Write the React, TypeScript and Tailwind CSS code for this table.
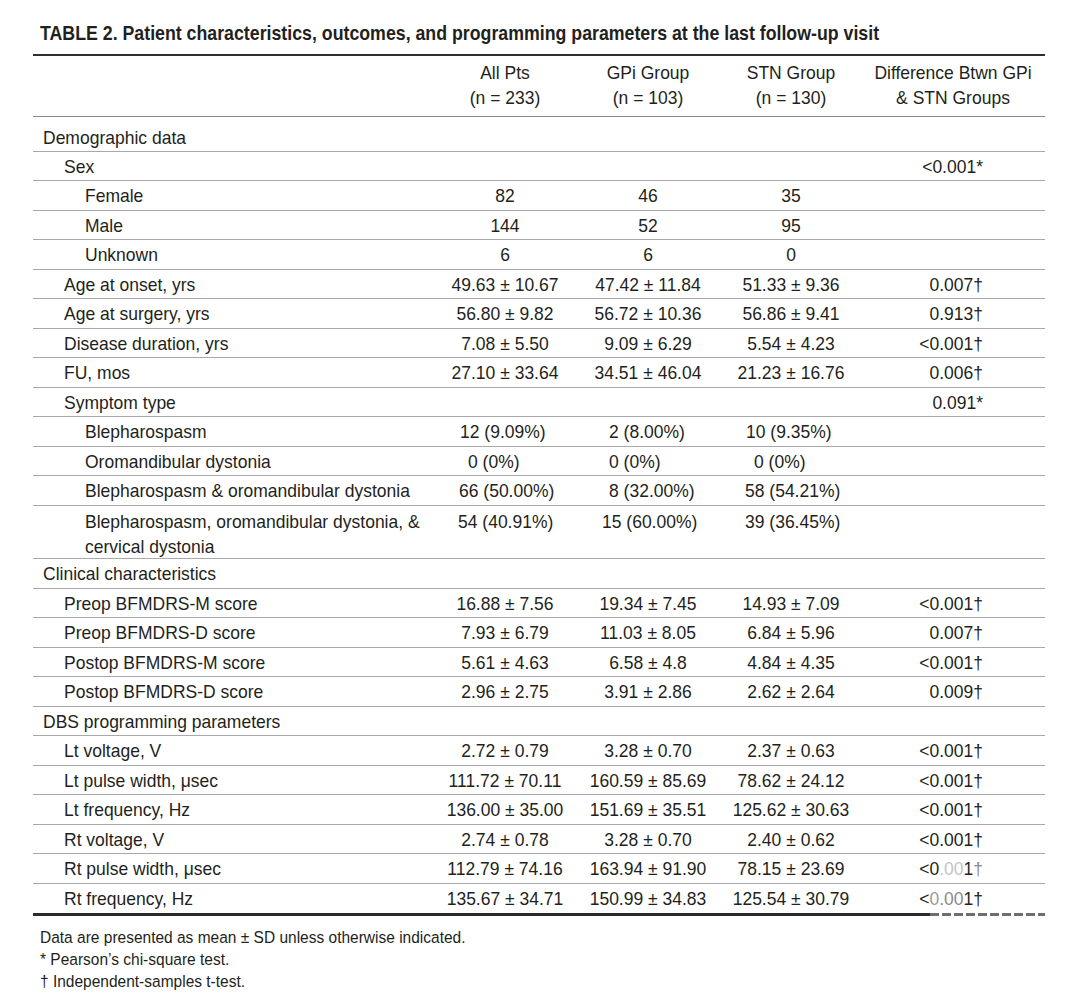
import React from "react";

type Cell = { t: string; cls?: string } | string;
type Row = {
  label: React.ReactNode;
  level: 0 | 1 | 2;
  vals?: Cell[];
  diff?: React.ReactNode;
  double?: boolean;
  first?: boolean;
  last?: boolean;
};

const rows: Row[] = [
  { label: "Demographic data", level: 0, first: true },
  { label: "Sex", level: 1, diff: "<0.001*" },
  { label: "Female", level: 2, vals: ["82", "46", "35"] },
  { label: "Male", level: 2, vals: ["144", "52", "95"] },
  { label: "Unknown", level: 2, vals: ["6", "6", "0"] },
  { label: "Age at onset, yrs", level: 1, vals: ["49.63 ± 10.67", "47.42 ± 11.84", "51.33 ± 9.36"], diff: "0.007†" },
  { label: "Age at surgery, yrs", level: 1, vals: ["56.80 ± 9.82", "56.72 ± 10.36", "56.86 ± 9.41"], diff: "0.913†" },
  { label: "Disease duration, yrs", level: 1, vals: ["7.08 ± 5.50", "9.09 ± 6.29", "5.54 ± 4.23"], diff: "<0.001†" },
  { label: "FU, mos", level: 1, vals: ["27.10 ± 33.64", "34.51 ± 46.04", "21.23 ± 16.76"], diff: "0.006†" },
  { label: "Symptom type", level: 1, diff: "0.091*" },
  {
    label: "Blepharospasm",
    level: 2,
    vals: [
      { t: "12 (9.09%)", cls: "pl-[27px]" },
      { t: "2 (8.00%)", cls: "pl-[32px]" },
      { t: "10 (9.35%)", cls: "pl-[27px]" },
    ],
  },
  {
    label: "Oromandibular dystonia",
    level: 2,
    vals: [
      { t: "0 (0%)", cls: "pl-[35px]" },
      { t: "0 (0%)", cls: "pl-[32px]" },
      { t: "0 (0%)", cls: "pl-[35px]" },
    ],
  },
  {
    label: "Blepharospasm & oromandibular dystonia",
    level: 2,
    vals: [
      { t: "66 (50.00%)", cls: "pl-[26px]" },
      { t: "8 (32.00%)", cls: "pl-[32px]" },
      { t: "58 (54.21%)", cls: "pl-[26px]" },
    ],
  },
  {
    label: (
      <>
        <T>Blepharospasm, oromandibular dystonia, &amp;</T>
        <br />
        <T>cervical dystonia</T>
      </>
    ),
    level: 2,
    double: true,
    vals: [
      { t: "54 (40.91%)", cls: "pl-[25px]" },
      { t: "15 (60.00%)", cls: "pl-[25px]" },
      { t: "39 (36.45%)", cls: "pl-[26px]" },
    ],
  },
  { label: "Clinical characteristics", level: 0 },
  { label: "Preop BFMDRS-M score", level: 1, vals: ["16.88 ± 7.56", "19.34 ± 7.45", "14.93 ± 7.09"], diff: "<0.001†" },
  { label: "Preop BFMDRS-D score", level: 1, vals: ["7.93 ± 6.79", "11.03 ± 8.05", "6.84 ± 5.96"], diff: "0.007†" },
  { label: "Postop BFMDRS-M score", level: 1, vals: ["5.61 ± 4.63", "6.58 ± 4.8", "4.84 ± 4.35"], diff: "<0.001†" },
  { label: "Postop BFMDRS-D score", level: 1, vals: ["2.96 ± 2.75", "3.91 ± 2.86", "2.62 ± 2.64"], diff: "0.009†" },
  { label: "DBS programming parameters", level: 0 },
  { label: "Lt voltage, V", level: 1, vals: ["2.72 ± 0.79", "3.28 ± 0.70", "2.37 ± 0.63"], diff: "<0.001†" },
  { label: "Lt pulse width, μsec", level: 1, vals: ["111.72 ± 70.11", "160.59 ± 85.69", "78.62 ± 24.12"], diff: "<0.001†" },
  { label: "Lt frequency, Hz", level: 1, vals: ["136.00 ± 35.00", "151.69 ± 35.51", "125.62 ± 30.63"], diff: "<0.001†" },
  { label: "Rt voltage, V", level: 1, vals: ["2.74 ± 0.78", "3.28 ± 0.70", "2.40 ± 0.62"], diff: "<0.001†" },
  {
    label: "Rt pulse width, μsec",
    level: 1,
    vals: ["112.79 ± 74.16", "163.94 ± 91.90", "78.15 ± 23.69"],
    diff: (
      <>
        &lt;0<span className="text-[#c4c4c4]">.00</span>1<span className="text-[#8a8a8a]">†</span>
      </>
    ),
  },
  {
    label: "Rt frequency, Hz",
    level: 1,
    last: true,
    vals: ["135.67 ± 34.71", "150.99 ± 34.83", "125.54 ± 30.79"],
    diff: (
      <>
        &lt;<span className="text-[#9a9a9a]">0</span>
        <span className="text-[#8a8a8a]">.00</span>1†
      </>
    ),
  },
];

const indent = ["pl-[10px]", "pl-[31px]", "pl-[52px]"];

function T({ children }: { children: React.ReactNode }) {
  return <span className="inline-block scale-y-[1.1] whitespace-nowrap">{children}</span>;
}

function ValueCell({ c, top }: { c?: Cell; top?: boolean }) {
  const v = top ? "items-start pt-[3px] leading-[25px]" : "items-center";
  if (!c) return <div />;
  if (typeof c === "string")
    return (
      <div className={`flex ${v} justify-center`}>
        <T>{c}</T>
      </div>
    );
  return (
    <div className={`flex ${v} justify-start ${c.cls ?? ""}`}>
      <T>{c.t}</T>
    </div>
  );
}

function TableRow({ r }: { r: Row }) {
  const h = r.first ? "h-[34.5px] pt-[6px]" : r.double ? "h-[53.5px]" : "h-[29.5px]";
  const border = r.last ? "" : "border-b-[1.5px] border-[#a8a8a8]";
  const align = r.double ? "items-start pt-[3px] leading-[25px]" : "items-center";
  return (
    <div className={`grid grid-cols-[400px_144px_142px_144px_182px] ${h} ${border}`}>
      <div className={`flex ${align} ${indent[r.level]}`}>
        <div>{typeof r.label === "string" ? <T>{r.label}</T> : r.label}</div>
      </div>
      {[0, 1, 2].map((i) => (
        <ValueCell key={i} c={r.vals?.[i]} top={r.double} />
      ))}
      <div className={`flex ${r.double ? "items-start pt-[3px]" : "items-center"} justify-end pr-[62px]`}>
        {r.diff ? <T>{r.diff}</T> : null}
      </div>
    </div>
  );
}

export default function App() {
  return (
    <div className="w-[1080px] h-[996px] bg-white text-[#231f20] font-['Liberation_Sans',Arial,sans-serif] overflow-hidden">
      <div className="pt-[20px] pl-[40px] text-[17.75px] font-bold leading-[26px]">
        <T>TABLE 2. Patient characteristics, outcomes, and programming parameters at the last follow-up visit</T>
      </div>
      <div className="ml-[33px] mt-[8px] w-[1012px] text-[17.5px]">
        <div className="border-t-2 border-[#2f2f2f]" />
        <div className="grid grid-cols-[400px_144px_142px_144px_182px] pt-[4px] pb-[6px] leading-[25px] border-b-[1.5px] border-[#8a8a8a]">
          <div />
          <div className="text-center">
            <T>All Pts</T>
            <br />
            <T>(n = 233)</T>
          </div>
          <div className="text-center">
            <T>GPi Group</T>
            <br />
            <T>(n = 103)</T>
          </div>
          <div className="text-center">
            <T>STN Group</T>
            <br />
            <T>(n = 130)</T>
          </div>
          <div className="text-center pr-[2px]">
            <T>Difference Btwn GPi</T>
            <br />
            <T>&amp; STN Groups</T>
          </div>
        </div>
        {rows.map((r, i) => (
          <TableRow key={i} r={r} />
        ))}
        <div className="flex h-[3px]">
          <div className="w-[897px] bg-[#2b2b2b]" />
          <div className="flex-1 bg-[repeating-linear-gradient(90deg,#6e6e6e_0_9px,transparent_9px_12px)]" />
        </div>
        <div className="pt-[10px] pl-[7px] text-[15.5px] leading-[22px]">
          <div>
            <T>Data are presented as mean ± SD unless otherwise indicated.</T>
          </div>
          <div>
            <T>* Pearson’s chi-square test.</T>
          </div>
          <div>
            <T>† Independent-samples t-test.</T>
          </div>
        </div>
      </div>
    </div>
  );
}
